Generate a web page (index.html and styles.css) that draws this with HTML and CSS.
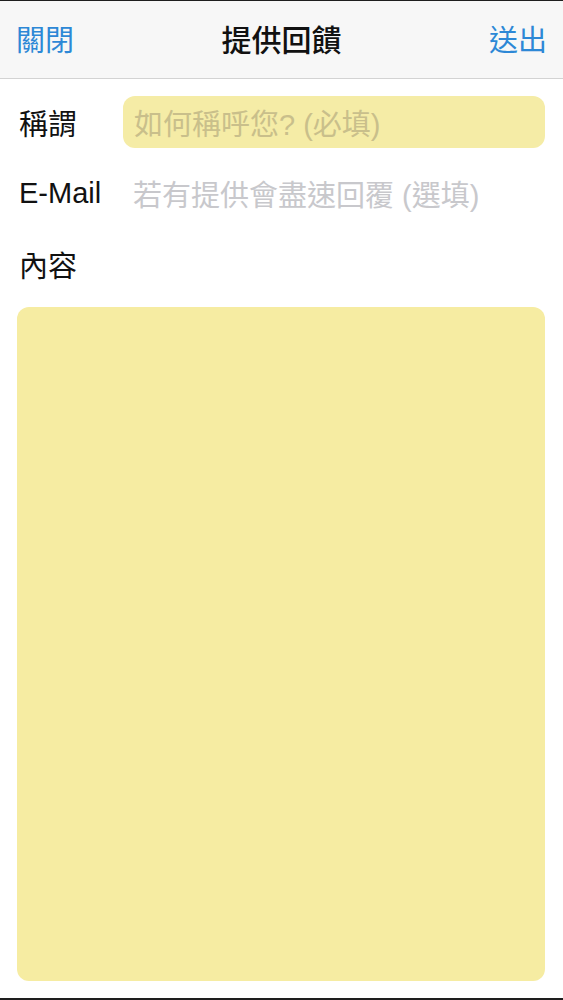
FILE: index.html
```html
<!DOCTYPE html>
<html lang="zh-Hant">
<head>
<meta charset="utf-8">
<title>提供回饋</title>
<link rel="stylesheet" href="styles.css">
</head>
<body>
<div class="screen">
  <header class="nav">
    <span class="nav-btn">關閉</span>
    <span class="nav-title">提供回饋</span>
    <span class="nav-btn">送出</span>
  </header>
  <main class="form">
    <div class="row">
      <span class="label">稱謂</span>
      <div class="input filled"><span class="ph ph-yellow">如何稱呼您? (必填)</span></div>
    </div>
    <div class="row">
      <span class="label">E-Mail</span>
      <div class="input plain"><span class="ph ph-gray">若有提供會盡速回覆 (選填)</span></div>
    </div>
    <div class="row">
      <span class="label">內容</span>
    </div>
    <div class="textarea"></div>
  </main>
</div>
</body>
</html>
```

FILE: styles.css
```css
html, body {
  margin: 0;
  padding: 0;
  background: #ffffff;
}
.screen {
  box-sizing: border-box;
  width: 563px;
  height: 1000px;
  border-top: 1px solid #1e1e1e;
  border-bottom: 2px solid #1e1e1e;
  display: flex;
  flex-direction: column;
  font-family: "Liberation Sans", "Noto Sans CJK TC", sans-serif;
  background: #ffffff;
}
.nav {
  height: 78px;
  flex: none;
  background: #f7f7f7;
  border-bottom: 1px solid #d3d3d3;
  display: flex;
  align-items: center;
  justify-content: space-between;
  padding: 0 16px 3px 16px;
  box-sizing: border-box;
}
.nav-btn {
  color: #2d88d6;
  font-size: 29px;
}
.nav-title {
  color: #111111;
  font-size: 30px;
  font-weight: 500;
}
.form {
  flex: 1;
  display: flex;
  flex-direction: column;
  padding: 0 18px 17px 17px;
}
.row {
  height: 52px;
  display: flex;
  align-items: center;
  margin-top: 19px;
}
.row:first-child {
  margin-top: 17px;
}
.label {
  width: 106px;
  flex: none;
  padding-left: 2px;
  box-sizing: border-box;
  font-size: 29px;
  color: #111111;
}
.input {
  flex: 1;
  height: 52px;
  display: flex;
  align-items: center;
  border-radius: 12px;
  padding-left: 11px;
}
.filled {
  background: #f5eca6;
}
.plain {
  padding-left: 10px;
}
.ph {
  font-size: 29px;
}
.ph-yellow {
  color: #c9bf8b;
}
.ph-gray {
  color: #c8c8cc;
}
.textarea {
  flex: 1;
  margin-top: 17px;
  background: #f6eca2;
  border-radius: 12px;
}
```
